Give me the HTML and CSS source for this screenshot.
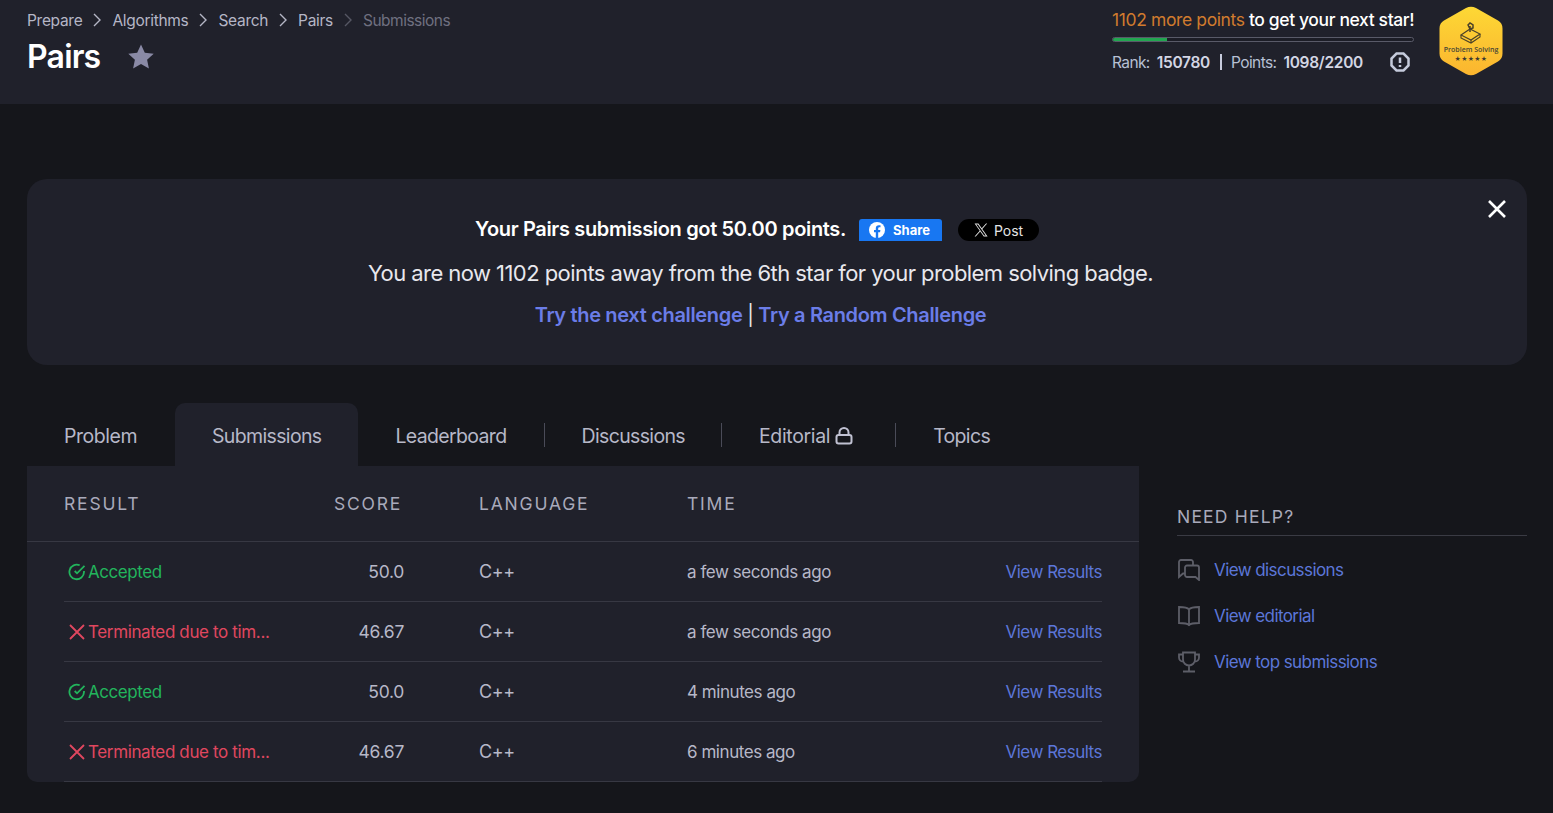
FILE: index.html
```html
<!DOCTYPE html>
<html lang="en">
<head>
<meta charset="utf-8">
<title>Pairs | Submissions</title>
<link rel="stylesheet" href="styles.css">
</head>
<body>
<header class="top">
  <div class="top-left">
    <nav class="crumbs">
      <a>Prepare</a><svg class="chev" viewBox="0 0 10 16"><path d="M2 2l6 6-6 6"/></svg>
      <a>Algorithms</a><svg class="chev" viewBox="0 0 10 16"><path d="M2 2l6 6-6 6"/></svg>
      <a>Search</a><svg class="chev" viewBox="0 0 10 16"><path d="M2 2l6 6-6 6"/></svg>
      <a>Pairs</a><svg class="chev dim" viewBox="0 0 10 16"><path d="M2 2l6 6-6 6"/></svg>
      <span class="crumb-current">Submissions</span>
    </nav>
    <div class="title-row">
      <h1>Pairs</h1>
      <svg class="star" viewBox="0 0 26 25"><path d="M13 .5l3.800 8.200 8.900 1-6.600 6 1.800 8.800L13 20l-7.900 4.500 1.800-8.800-6.600-6 8.900-1z"/></svg>
    </div>
  </div>
  <div class="progress-wrap">
    <div class="progress">
      <div class="next"><span class="orange">1102 more points</span> to get your next star!</div>
      <div class="bar"><div class="bar-fill" style="width:18%"></div></div>
      <div class="stats">
        <span class="stat-label">Rank:</span><b>150780</b><i class="pipe"></i>
        <span class="stat-label">Points:</span><b>1098/2200</b>
        <svg class="info" viewBox="0 0 20 20"><path class="info-o" d="M6.500 1.500h7l5 5v7l-5 5h-7l-5-5v-7z"/><path class="info-i" d="M10 5.500v5.500M10 13v2"/></svg>
      </div>
    </div>
    <svg class="badge" viewBox="0 0 64 70">
      <defs><linearGradient id="gold" x1="0" y1="0" x2="0" y2="1"><stop offset="0" stop-color="#fdd835"/><stop offset="1" stop-color="#fbb52f"/></linearGradient></defs>
      <path d="M27 2q5-2.500 10 0l22 12.500q4.500 2.500 4.500 8v25q0 5.500-4.500 8L37 68q-5 2.500-10 0L5 55.500q-4.500-2.500-4.500-8v-25q0-5.500 4.500-8z" fill="url(#gold)"/>
      <g fill="none" stroke="#4a4028" stroke-width="1.100"><path d="M22 29l9-6 10 5-9 6z"/><path d="M22 29v3l10 5 9-6v-3M32 34v3"/><path d="M31 26v-6M29 19l2-2 3 2v3l-3 1z" stroke-width="1.500"/></g>
      <text x="32" y="45.500" class="badge-t">Problem Solving</text>
      <text x="32" y="55" class="badge-s">★★★★★</text>
    </svg>
  </div>
</header>

<main class="page">
  <section class="banner">
    <button class="close" aria-label="Close"><svg viewBox="0 0 20 20"><path d="M2 2l16 16M18 2L2 18"/></svg></button>
    <div class="banner-top">
      <strong>Your Pairs submission got 50.00 points.</strong>
      <a class="fb"><svg viewBox="0 0 16 16"><circle cx="8" cy="8" r="8" fill="#fff"/><path d="M6.800 16V10.300H5V8h1.800V6.300c0-2 1.200-3.100 3-3.100.8 0 1.700.15 1.700.15V5.300h-1c-1 0-1.300.6-1.300 1.250V8h2.200l-.35 2.300H9.200V16z" fill="#1877f2"/></svg>Share</a>
      <a class="xp"><svg viewBox="0 0 24 24"><path d="M14.200 10.200L22.600 1h-2l-7.300 8L7.500 1H1l8.800 12.400L1 23h2l7.700-8.400L16.800 23h6.500zM3.800 2.500h2.900l13.600 19h-2.900z"/></svg>Post</a>
    </div>
    <p class="banner-msg">You are now 1102 points away from the 6th star for your problem solving badge.</p>
    <p class="banner-links"><a>Try the next challenge</a> <span class="pipe-text">|</span> <a>Try a Random Challenge</a></p>
  </section>

  <nav class="tabs">
    <a class="tab tab-first">Problem</a>
    <a class="tab active">Submissions</a>
    <a class="tab sep tab-board">Leaderboard</a>
    <a class="tab sep">Discussions</a>
    <a class="tab sep tab-editorial">Editorial<svg class="lock" viewBox="0 0 18 18"><rect x="1.500" y="8" width="15" height="8.500" rx="2"/><path d="M4.500 8V5.500a4.500 4.500 0 0 1 9 0V8"/></svg></a>
    <a class="tab">Topics</a>
  </nav>

  <div class="content">
    <section class="table">
      <div class="row head">
        <div class="c-result">RESULT</div><div class="c-score">SCORE</div><div class="c-lang">LANGUAGE</div><div class="c-time">TIME</div>
      </div>
      <div class="body">
        <div class="row">
          <div class="c-result ok"><svg class="ic" viewBox="0 0 18 18"><path d="M16 7.900V9a7.300 7.300 0 1 1-4.300-6.700"/><path d="M16.500 2.800L9 10.300 6.700 8"/></svg>Accepted</div>
          <div class="c-score num">50.0</div><div class="c-lang">C++</div><div class="c-time">a few seconds ago</div><a class="view">View Results</a>
        </div>
        <div class="row">
          <div class="c-result bad"><svg class="ic" viewBox="0 0 18 18"><path d="M2 2l14 14M16 2L2 16"/></svg>Terminated due to tim...</div>
          <div class="c-score num">46.67</div><div class="c-lang">C++</div><div class="c-time">a few seconds ago</div><a class="view">View Results</a>
        </div>
        <div class="row">
          <div class="c-result ok"><svg class="ic" viewBox="0 0 18 18"><path d="M16 7.900V9a7.300 7.300 0 1 1-4.300-6.700"/><path d="M16.500 2.800L9 10.300 6.700 8"/></svg>Accepted</div>
          <div class="c-score num">50.0</div><div class="c-lang">C++</div><div class="c-time">4 minutes ago</div><a class="view">View Results</a>
        </div>
        <div class="row">
          <div class="c-result bad"><svg class="ic" viewBox="0 0 18 18"><path d="M2 2l14 14M16 2L2 16"/></svg>Terminated due to tim...</div>
          <div class="c-score num">46.67</div><div class="c-lang">C++</div><div class="c-time">6 minutes ago</div><a class="view">View Results</a>
        </div>
      </div>
    </section>
    <aside class="help">
      <h2>NEED HELP?</h2>
      <a class="help-link"><svg viewBox="0 0 24 22"><path d="M16 6V3a2 2 0 0 0-2-2H4a2 2 0 0 0-2 2v15l4-3.500h2"/><path d="M10 6.500h10a2 2 0 0 1 2 2V21l-3.500-3H10a2 2 0 0 1-2-2V8.500a2 2 0 0 1 2-2z"/></svg>View discussions</a>
      <a class="help-link"><svg viewBox="0 0 24 22"><path d="M12 4.500C10.500 2.500 8 2 2 2v16c6 0 8.500.5 10 2 1.500-1.500 4-2 10-2V2c-6 0-8.500.5-10 2.500zM12 4.500V21"/></svg>View editorial</a>
      <a class="help-link"><svg viewBox="0 0 24 22"><path d="M6 1.500h12v7a6 6 0 0 1-12 0zM6 3.500H2v3a4 4 0 0 0 4 4M18 3.500h4v3a4 4 0 0 1-4 4M12 14.500v5.500M6 20.500h12"/></svg>View top submissions</a>
    </aside>
  </div>
</main>
</body>
</html>
```
FILE: styles.css
```css
* { box-sizing: border-box; }
html, body { margin: 0; padding: 0; }
body {
  height: 813px;
  overflow: hidden;
  background: #15161b;
  color: #b7b8c8;
  font-family: Inter, "Liberation Sans", sans-serif;
  letter-spacing: -0.35px;
}
a { color: inherit; text-decoration: none; }
p { margin: 0; }

.top {
  height: 104px;
  background: #20212b;
  padding: 0 50px 0 27px;
  display: flex;
  justify-content: space-between;
}
.crumbs {
  display: flex;
  align-items: center;
  height: 20px;
  margin-top: 10px;
  font-size: 15.500px;
  letter-spacing: -0.3px;
  color: #b5b6c6;
}
.chev { width: 10px; height: 16px; margin: 0 10px; fill: none; stroke: #b5b6c6; stroke-width: 1.400; }
.chev.dim { stroke: #565764; }
.crumb-current { color: #6f7080; letter-spacing: -0.5px; }
.title-row { display: flex; align-items: center; margin-top: 8px; height: 36px; }
h1 { margin: 0; font-size: 32px; font-weight: 600; color: #fff; letter-spacing: -0.8px; }
.star { width: 26px; height: 25px; margin-left: 28px; fill: #8a8aa6; }

.progress-wrap { display: flex; align-items: flex-start; }
.progress { width: 302px; margin-top: 9px; }
.next { font-size: 17.500px; line-height: 21px; color: #fff; font-weight: 500; white-space: nowrap; letter-spacing: -0.38px; }
.orange { color: #d17b2e; font-weight: 400; }
.bar { height: 5px; margin-top: 7px; border: 1px solid #595a68; border-radius: 3px; background: #1c1d26; overflow: hidden; }
.bar-fill { height: 100%; background: #22a650; }
.stats { display: flex; align-items: center; margin-top: 9px; height: 22px; font-size: 15.500px; letter-spacing: -0.3px; }
.stat-label { color: #b7c0d4; margin-right: 7px; letter-spacing: -0.6px; }
.stats b { color: #d3d6e4; font-weight: 600; }
.pipe { width: 2px; height: 16px; background: #c7cbdc; margin: 0 9px 0 10px; }
.info { width: 20px; height: 20px; margin-left: auto; margin-right: 4px; fill: none; stroke: #c5cbdc; stroke-width: 2.500; }
.badge { width: 64px; height: 70px; margin: 6px 0 0 25px; }
.badge-t { font-family: "Open Sans", sans-serif; font-size: 7px; font-weight: 600; fill: #4a4636; text-anchor: middle; letter-spacing: 0; }
.badge-s { font-size: 6px; fill: #3c3a30; text-anchor: middle; letter-spacing: 0.300px; }

.page { padding: 75px 26px 0 27px; }
.banner {
  position: relative;
  height: 186px;
  background: #20212b;
  border-radius: 20px;
  padding: 36px 33px 0 0;
  text-align: center;
}
.close { position: absolute; top: 20px; right: 20px; width: 20px; height: 20px; padding: 0; border: 0; background: none; }
.close svg { display: block; fill: none; stroke: #fff; stroke-width: 2.600; }
.banner-top { display: flex; justify-content: center; align-items: center; height: 28px; padding-right: 7px; color: #fff; }
.banner-top strong { font-size: 20px; font-weight: 600; letter-spacing: -0.34px; }
.fb {
  display: flex; align-items: center; gap: 8px;
  width: 83px; height: 22px; margin: 2px 0 0 13px; padding-left: 10px;
  background: #1877f2; border-radius: 3px 3px 0 0;
  font-size: 13px; font-weight: 700; letter-spacing: 0;
}
.fb svg { width: 16px; height: 16px; }
.xp {
  display: flex; align-items: center; justify-content: center; gap: 6px;
  width: 81px; height: 22px; margin: 2px 0 0 16px;
  background: #000; border-radius: 11px;
  font-size: 14px; letter-spacing: 0; color: #e4e4e4;
}
.xp svg { width: 14px; height: 14px; fill: #e4e4e4; }
.banner-msg { margin-top: 16px; font-size: 22px; line-height: 28px; color: #e8e8ee; letter-spacing: -0.56px; }
.banner-links { margin-top: 14px; font-size: 20px; line-height: 28px; color: #e8e8ee; font-weight: 600; letter-spacing: -0.33px; }
.banner-links a { color: #6b7de8; }
.pipe-text { font-weight: 400; }

.tabs { display: flex; margin-top: 38px; height: 63px; width: 1112px; padding-top: 2px; }
.tab {
  position: relative;
  display: flex; align-items: center; gap: 5px;
  padding: 0 37px;
  font-size: 19.500px;
  color: #b7b8c8;
  letter-spacing: -0.65px;
}
.tab-first { min-width: 148px; letter-spacing: -0.45px; }
.tab-board { padding-right: 38px; }
.tab-editorial { letter-spacing: -0.35px; }
.tab.active { background: #20212b; border-radius: 10px 10px 0 0; margin-top: -2px; padding-top: 2px; }
.tab.sep::after {
  content: ""; position: absolute; right: 0; top: 18px; width: 1px; height: 24px; background: #4a4b58;
}
.lock { width: 18px; height: 18px; margin-right: 6px; fill: none; stroke: #c0c1d2; stroke-width: 2; }

.content { display: flex; gap: 38px; align-items: flex-start; }
.table { width: 1112px; height: 316px; background: #20212b; border-radius: 0 0 10px 10px; }
.row { display: flex; align-items: center; height: 60px; padding-top: 1px; border-bottom: 1px solid #373843; font-size: 17px; letter-spacing: -0.45px; }
.row.head { height: 76px; padding: 0 37px; font-size: 17.500px; letter-spacing: 1.800px; color: #a9aabb; }
.body { padding: 0 37px; }
.c-result { width: 270px; display: flex; align-items: center; white-space: nowrap; }
.c-score { width: 145px; }
.c-lang { width: 208px; padding-bottom: 2px; font-size: 18px; letter-spacing: -0.35px; }
.head .c-lang { padding-bottom: 0; font-size: 17.500px; letter-spacing: 1.800px; }
.c-time { flex: 1; }
.num { width: 70px; margin-right: 75px; padding-bottom: 2px; text-align: right; font-size: 17.500px; letter-spacing: -0.3px; }
.ok { color: #22b45c; }
.bad { color: #e0475f; letter-spacing: -0.36px; }
.ic { width: 18px; height: 18px; margin: 0 2px 0 4px; fill: none; stroke: currentColor; stroke-width: 1.800; flex: none; }
.view { color: #5c76d8; letter-spacing: -0.5px; }

.help { width: 350px; padding-top: 38px; }
.help h2 { margin: 0 0 11px; height: 32px; border-bottom: 1px solid #3a3b44; font-size: 17.500px; line-height: 26px; font-weight: 400; letter-spacing: 1.200px; color: #a9aabb; }
.help-link { display: flex; align-items: center; gap: 13px; height: 46px; font-size: 17px; letter-spacing: -0.58px; color: #5c76d8; }
.help-link svg { width: 24px; height: 22px; fill: none; stroke: #5d5e68; stroke-width: 1.800; flex: none; }
```
